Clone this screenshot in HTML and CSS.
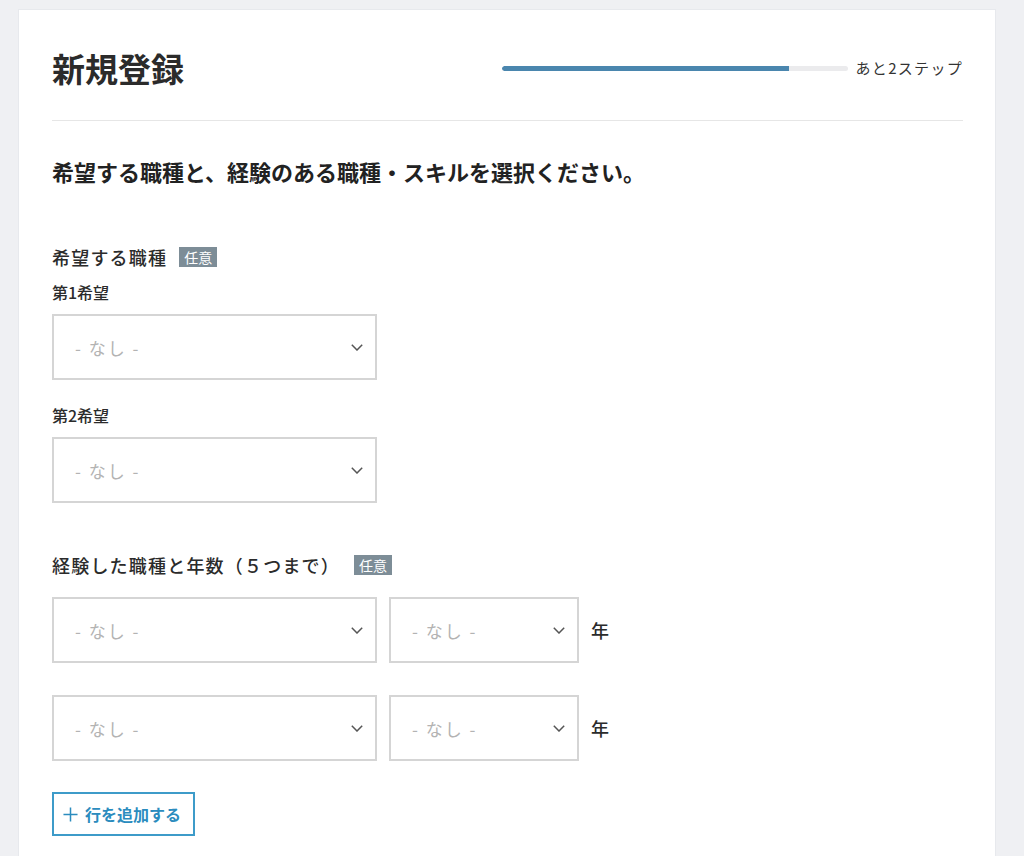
FILE: index.html
```html
<!DOCTYPE html>
<html lang="ja">
<head>
<meta charset="utf-8">
<title>新規登録</title>
<link rel="stylesheet" href="styles.css">
</head>
<body>
<main class="card">
  <header class="card-header">
    <h1 class="title">新規登録</h1>
    <div class="progress">
      <div class="progress-track"><div class="progress-fill" style="width:83%"></div></div>
      <span class="progress-text">あと2ステップ</span>
    </div>
  </header>

  <h2 class="lead">希望する職種と、経験のある職種・スキルを選択ください。</h2>

  <section class="group group-hope">
    <div class="group-label">希望する職種<span class="badge">任意</span></div>
    <div class="sub-label">第1希望</div>
    <div class="select select-wide"><span class="placeholder">- なし -</span><svg class="chev" viewBox="0 0 12 7"><path d="M0.8 0.8 L6 6 L11.2 0.8"/></svg></div>
    <div class="sub-label sub-label-2">第2希望</div>
    <div class="select select-wide"><span class="placeholder">- なし -</span><svg class="chev" viewBox="0 0 12 7"><path d="M0.8 0.8 L6 6 L11.2 0.8"/></svg></div>
  </section>

  <section class="group group-exp">
    <div class="group-label">経験した職種と年数（５つまで）<span class="badge badge-wide">任意</span></div>
    <div class="exp-row">
      <div class="select select-wide"><span class="placeholder">- なし -</span><svg class="chev" viewBox="0 0 12 7"><path d="M0.8 0.8 L6 6 L11.2 0.8"/></svg></div>
      <div class="select select-narrow"><span class="placeholder">- なし -</span><svg class="chev" viewBox="0 0 12 7"><path d="M0.8 0.8 L6 6 L11.2 0.8"/></svg></div>
      <span class="unit">年</span>
    </div>
    <div class="exp-row">
      <div class="select select-wide"><span class="placeholder">- なし -</span><svg class="chev" viewBox="0 0 12 7"><path d="M0.8 0.8 L6 6 L11.2 0.8"/></svg></div>
      <div class="select select-narrow"><span class="placeholder">- なし -</span><svg class="chev" viewBox="0 0 12 7"><path d="M0.8 0.8 L6 6 L11.2 0.8"/></svg></div>
      <span class="unit">年</span>
    </div>
    <button class="add-btn" type="button"><svg class="plus" viewBox="0 0 16 16"><path d="M8 0.5 V15.5 M0.5 8 H15.5"/></svg><span>行を追加する</span></button>
  </section>
</main>
</body>
</html>
```

FILE: styles.css
```css
* { box-sizing: border-box; }

html, body {
  margin: 0;
  padding: 0;
  background: #eff0f3;
  font-family: "Noto Sans CJK JP", "Noto Sans", sans-serif;
  color: #2b2b2b;
}

.card {
  margin: 9px 28px 0 18px;
  min-height: 847px;
  background: #ffffff;
  border: 1px solid #e7e9ed;
  border-bottom: none;
  padding: 0 32px 0 33px;
}

.card-header {
  display: flex;
  align-items: center;
  padding: 36px 0 30px;
  border-bottom: 1px solid #e6e6e6;
}

.title {
  margin: 0;
  font-size: 33px;
  line-height: 44px;
  font-weight: 700;
  color: #2b2b2b;
}

.progress {
  margin-left: auto;
  display: flex;
  align-items: center;
  gap: 8px;
}

.progress-track {
  width: 346px;
  height: 5px;
  border-radius: 3px;
  background: #ebebed;
  overflow: hidden;
}

.progress-fill {
  height: 100%;
  background: #4a86ae;
  border-radius: 3px 0 0 3px;
}

.progress-text {
  font-size: 15px;
  letter-spacing: 1.3px;
  color: #333;
  line-height: 22px;
}

.lead {
  margin: 34px 0 0;
  font-size: 22px;
  line-height: 32px;
  font-weight: 700;
  color: #222;
}

.group-hope { margin-top: 57px; }
.group-exp { margin-top: 49px; }

.group-label {
  display: flex;
  align-items: center;
  font-size: 18px;
  line-height: 26px;
  font-weight: 500;
  letter-spacing: 1.2px;
  color: #2b2b2b;
}

.badge {
  margin-left: 12px;
  width: 38px;
  height: 20px;
  display: inline-flex;
  align-items: center;
  justify-content: center;
  background: #7d8d97;
  color: #fff;
  font-size: 14px;
  letter-spacing: 0;
  font-weight: 400;
}

.badge-wide { margin-left: 14px; }

.sub-label {
  margin-top: 11px;
  font-size: 16px;
  line-height: 22px;
  font-weight: 500;
  color: #2b2b2b;
}

.sub-label-2 { margin-top: 24px; }

.select {
  position: relative;
  display: flex;
  align-items: center;
  height: 66px;
  border: 2px solid #d5d5d5;
  padding: 0 12px 0 21px;
  background: #fff;
}

.sub-label + .select { margin-top: 11px; }

.select-wide { width: 325px; }
.select-narrow { width: 190px; }

.placeholder {
  font-size: 17px;
  letter-spacing: 2px;
  color: #b3b3b3;
}

.chev {
  margin-left: auto;
  width: 12px;
  height: 7px;
  fill: none;
  stroke: #555;
  stroke-width: 1.5;
}

.exp-row {
  display: flex;
  align-items: center;
  gap: 12px;
  margin-top: 19px;
}

.exp-row + .exp-row { margin-top: 32px; }

.unit {
  font-size: 18px;
  font-weight: 500;
  color: #2b2b2b;
}

.add-btn {
  margin-top: 31px;
  display: inline-flex;
  align-items: center;
  gap: 7px;
  height: 44px;
  width: 143px;
  padding: 0 0 0 9px;
  border: 2px solid #3d9bc9;
  background: #fff;
  color: #2b8cbe;
  font-family: inherit;
  font-size: 16px;
  font-weight: 700;
  cursor: pointer;
}

.plus {
  width: 15px;
  height: 15px;
  fill: none;
  stroke: #2b8cbe;
  stroke-width: 1.6;
}
```
